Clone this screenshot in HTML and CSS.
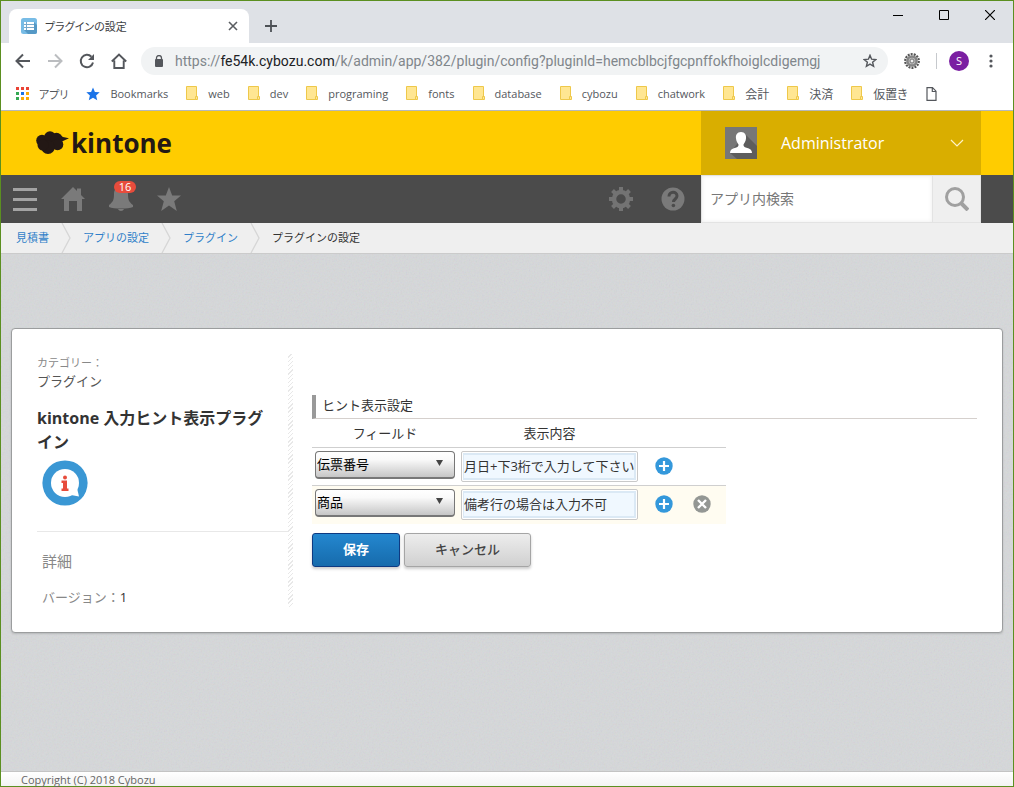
FILE: index.html
```html
<!DOCTYPE html>
<html lang="ja">
<head>
<meta charset="utf-8">
<title>プラグインの設定</title>
<link rel="stylesheet" href="styles.css">
</head>
<body>
<svg class="defs" aria-hidden="true">
  <symbol id="folder" viewBox="0 0 12 15">
    <path d="M.5.5h10v13H.5z" fill="#ffe692" stroke="#eec84a"/>
    <path d="M9.5 10.5h2v3h-2z" fill="#ffe692" stroke="#eec84a"/>
  </symbol>
  <symbol id="plus" viewBox="0 0 18 18">
    <circle cx="9" cy="9" r="8.7" fill="#3498db"/>
    <path d="M9 4v10M4 9h10" stroke="#fff" stroke-width="2.2"/>
  </symbol>
  <symbol id="remove" viewBox="0 0 18 18">
    <circle cx="9" cy="9" r="8.7" fill="#949794"/>
    <path d="M5 5l8 8M13 5l-8 8" stroke="#fff" stroke-width="2.4"/>
  </symbol>
</svg>
<div class="window">
  <div class="tabstrip">
    <div class="tab">
      <svg width="16" height="16" viewBox="0 0 16 16"><rect width="16" height="16" rx="2.5" fill="#78bce6"/><path d="M13 4l3 3v7a2 2 0 0 1-2 2H7l-4-4z" fill="#5599c6"/><rect x="3" y="4" width="10" height="8" fill="#fff"/><path d="M3 6.500h10M3 9.500h10M5.500 4v8" stroke="#78a9cc"/></svg>
      <span class="tab-title">プラグインの設定</span>
      <button class="icon-btn" aria-label="タブを閉じる"><svg width="10" height="10" viewBox="0 0 10 10"><path d="M1 1l8 8M9 1l-8 8" stroke="#5a5d61" stroke-width="1.6"/></svg></button>
    </div>
    <button class="icon-btn new-tab" aria-label="新しいタブ"><svg width="12" height="12" viewBox="0 0 12 12"><path d="M6 0v12M0 6h12" stroke="#4d5156" stroke-width="1.8"/></svg></button>
    <div class="window-controls">
      <button class="icon-btn" aria-label="最小化"><svg width="10" height="10" viewBox="0 0 10 10"><path d="M0 5.500h10" stroke="#000"/></svg></button>
      <button class="icon-btn" aria-label="最大化"><svg width="10" height="10" viewBox="0 0 10 10"><path d="M.5.5h9v9h-9z" fill="none" stroke="#000"/></svg></button>
      <button class="icon-btn" aria-label="閉じる"><svg width="10" height="10" viewBox="0 0 10 10"><path d="M0 0l10 10M10 0L0 10" stroke="#000" stroke-width="1.2"/></svg></button>
    </div>
  </div>

  <div class="toolbar">
    <div class="history">
      <button class="icon-btn" aria-label="戻る"><svg width="16" height="16" viewBox="0 0 16 16"><path d="M15 8H2M8 1.500L1.500 8 8 14.500" fill="none" stroke="#54575c" stroke-width="2"/></svg></button>
      <button class="icon-btn" aria-label="進む"><svg width="16" height="16" viewBox="0 0 16 16"><path d="M1 8h13M8 1.500L14.500 8 8 14.500" fill="none" stroke="#bbbdc0" stroke-width="2"/></svg></button>
      <button class="icon-btn" aria-label="再読み込み"><svg width="16" height="16" viewBox="0 0 16 16"><path d="M14 9.500A6.200 6.200 0 1 1 12.400 3.700" fill="none" stroke="#54575c" stroke-width="2"/><path d="M15 1v6H9z" fill="#54575c"/></svg></button>
      <button class="icon-btn" aria-label="ホーム"><svg width="16" height="16" viewBox="0 0 16 16"><path d="M.8 8.500L8 1.500l7.200 7M3.300 7.500v7.500h9.400V7.500" fill="none" stroke="#54575c" stroke-width="1.9"/></svg></button>
    </div>
    <div class="omnibox">
      <svg width="10" height="12" viewBox="0 0 10 12"><rect x="1" y="4" width="8" height="8" rx="1" fill="#54575c"/><path d="M2.500 5V3a2.500 2.500 0 0 1 5 0v2" fill="none" stroke="#54575c" stroke-width="1.3"/></svg>
      <span class="url">https://<span class="url-host">fe54k.cybozu.com</span>/k/admin/app/382/plugin/config?pluginId=hemcblbcjfgcpnffokfhoiglcdigemgj</span>
      <button class="icon-btn" aria-label="ブックマークに追加"><svg width="14" height="14" viewBox="0 0 14 14"><path d="M7 1.300l1.600 3.900 4.200.3-3.200 2.700 1 4.100L7 10.100l-3.600 2.200 1-4.100L1.200 5.500l4.200-.3z" fill="none" stroke="#54575c" stroke-width="1.4"/></svg></button>
    </div>
    <svg class="ext" width="16" height="16" viewBox="0 0 16 16"><circle cx="8" cy="8" r="6.800" fill="none" stroke="#555" stroke-width="2.2" stroke-dasharray="2 1.05"/><circle cx="8" cy="8" r="4.600" fill="#bbb" stroke="#858585" stroke-width="2.5"/><circle cx="8" cy="8" r="2" fill="#eee" stroke="#777"/></svg>
    <span class="toolbar-sep"></span>
    <button class="avatar" aria-label="プロフィール">S</button>
    <button class="icon-btn" aria-label="メニュー"><svg width="4" height="14" viewBox="0 0 4 14"><circle cx="2" cy="2" r="1.6" fill="#54575c"/><circle cx="2" cy="7" r="1.6" fill="#54575c"/><circle cx="2" cy="12" r="1.6" fill="#54575c"/></svg></button>
  </div>

  <nav class="bookmarks" aria-label="ブックマーク">
    <a href="#"><svg width="13" height="13" viewBox="0 0 13 13"><path d="M0 0h3v3H0zM5 0h3v3H5zM10 0h3v3h-3z" fill="#ea4335"/><path d="M0 5h3v3H0zM0 10h3v3H0z" fill="#34a853"/><path d="M5 5h3v3H5z" fill="#1a73e8"/><path d="M10 5h3v3h-3zM5 10h3v3H5zM10 10h3v3h-3z" fill="#fbaa05"/></svg>アプリ</a>
    <a href="#"><svg width="14" height="14" viewBox="0 0 14 14"><path d="M7 .5l1.900 4.400 4.800.4-3.600 3.200 1.100 4.800L7 10.800l-4.200 2.500 1.100-4.800L.3 5.300l4.800-.4z" fill="#1a73e8"/></svg>Bookmarks</a>
    <a href="#"><svg width="12" height="15"><use href="#folder"/></svg>web</a>
    <a href="#"><svg width="12" height="15"><use href="#folder"/></svg>dev</a>
    <a href="#"><svg width="12" height="15"><use href="#folder"/></svg>programing</a>
    <a href="#"><svg width="12" height="15"><use href="#folder"/></svg>fonts</a>
    <a href="#"><svg width="12" height="15"><use href="#folder"/></svg>database</a>
    <a href="#"><svg width="12" height="15"><use href="#folder"/></svg>cybozu</a>
    <a href="#"><svg width="12" height="15"><use href="#folder"/></svg>chatwork</a>
    <a class="kanji" href="#"><svg width="12" height="15"><use href="#folder"/></svg>会計</a>
    <a class="kanji" href="#"><svg width="12" height="15"><use href="#folder"/></svg>決済</a>
    <a class="kanji" href="#"><svg width="12" height="15"><use href="#folder"/></svg>仮置き</a>
    <a href="#" aria-label="ページ"><svg width="11" height="14" viewBox="0 0 11 14"><path d="M1 .7h5.500L10 4.200v9.100H1zM6.300.7v3.800H10" fill="none" stroke="#54575c" stroke-width="1.2"/></svg></a>
  </nav>

  <header class="brand">
    <a class="logo" href="#">
      <svg width="33" height="24" viewBox="0 0 33 24"><g fill="#231815"><circle cx="6" cy="9.500" r="5.800"/><circle cx="14" cy="6" r="5.800"/><circle cx="20.500" cy="7.500" r="5.800"/><circle cx="21.500" cy="13.500" r="5.800"/><circle cx="12" cy="16.300" r="6.800"/><circle cx="7" cy="14" r="5.500"/><path d="M24 4l3 2 6 1.300-6 2.700-3 2z"/></g></svg>
      <span>kintone</span>
    </a>
    <button class="user">
      <svg width="32" height="32" viewBox="0 0 32 32"><path fill="#777" d="M0 0h32v32H0z"/><path d="M20 7l12 12v13H12l-7-6z" fill="#5d5d5d"/><path d="M16 5c4 0 5.500 3 5 6.500-.3 3-1.500 4.500-2.500 6 0 2 .5 2.500 3 3.300 3.500 1 5.500 2.200 5.500 5.200H5c0-3 2-4.200 5.500-5.200 2.500-.8 3-1.300 3-3.300-1-1.500-2.200-3-2.500-6C10.500 8 12 5 16 5z" fill="#fff"/></svg>
      <span>Administrator</span>
      <svg width="14" height="8" viewBox="0 0 14 8"><path d="M1 1l6 6 6-6" fill="none" stroke="#fff3c8" stroke-width="1.2"/></svg>
    </button>
  </header>

  <div class="global-nav">
    <div class="nav-left">
      <button class="icon-btn" aria-label="メニュー"><svg width="24" height="23" viewBox="0 0 24 23"><path d="M0 1.500h24M0 11.500h24M0 21.500h24" stroke="#a3a3a3" stroke-width="3"/></svg></button>
      <button class="icon-btn" aria-label="ホーム"><svg width="24" height="24" viewBox="0 0 24 24"><path d="M12 0l4 4V1.500h4V8l4 4h-3v12h-5V14H8v10H3V12H0z" fill="#7a7a7a"/></svg></button>
      <button class="icon-btn bell" aria-label="通知 16件"><svg width="24" height="24" viewBox="0 0 24 24"><path d="M12 0c5 0 7 3 7 7 0 6 1 8 5 11v2c-5 2-19 2-24 0v-2c4-3 5-5 5-11 0-4 2-7 7-7zM9 22h6c-1 2.500-5 2.500-6 0z" fill="#7a7a7a"/></svg><span class="badge">16</span></button>
      <button class="icon-btn" aria-label="お気に入り"><svg width="24" height="24" viewBox="0 0 24 24"><path d="M12 0l3.200 8.600H24l-6.800 5.700L19.800 24 12 18.500 4.200 24l2.600-9.700L0 8.600h8.800z" fill="#7a7a7a"/></svg></button>
    </div>
    <div class="nav-right">
      <button class="icon-btn" aria-label="設定"><svg width="24" height="24" viewBox="0 0 24 24"><g fill="none" stroke="#737373"><circle cx="12" cy="12" r="7" stroke-width="4.5"/><path d="M12 0v4M12 20v4M0 12h4M20 12h4M3.500 3.500l3 3M17.500 17.500l3 3M3.500 20.500l3-3M17.500 6.500l3-3" stroke-width="4"/></g></svg></button>
      <button class="icon-btn" aria-label="ヘルプ"><svg width="24" height="24" viewBox="0 0 24 24"><circle cx="12" cy="12" r="11.500" fill="#7a7a7a"/><path d="M8 9.500C8 4 16 4 16 9c0 3-3.500 3-3.500 6" fill="none" stroke="#4b4b4b" stroke-width="3"/><circle cx="12.400" cy="18.500" r="1.800" fill="#4b4b4b"/></svg></button>
    </div>
    <form class="search">
      <input type="search" placeholder="アプリ内検索" aria-label="アプリ内検索">
      <button type="button" aria-label="検索"><svg width="24" height="24" viewBox="0 0 24 24"><circle cx="10" cy="10" r="8.500" fill="none" stroke="#a0a0a0" stroke-width="3"/><path d="M15.500 15.500l7.500 7.500" stroke="#a0a0a0" stroke-width="4"/></svg></button>
    </form>
  </div>

  <nav class="crumbs" aria-label="パンくず">
    <a href="#">見積書</a>
    <svg width="10" height="30" viewBox="0 0 10 30"><path d="M1 0l8 15-8 15" fill="none" stroke="#d6d6d6" stroke-width="1.3"/></svg>
    <a href="#">アプリの設定</a>
    <svg width="10" height="30" viewBox="0 0 10 30"><path d="M1 0l8 15-8 15" fill="none" stroke="#d6d6d6" stroke-width="1.3"/></svg>
    <a href="#">プラグイン</a>
    <svg width="10" height="30" viewBox="0 0 10 30"><path d="M1 0l8 15-8 15" fill="none" stroke="#d6d6d6" stroke-width="1.3"/></svg>
    <span>プラグインの設定</span>
  </nav>

  <main class="content">
    <svg class="grain" aria-hidden="true"><filter id="grain" x="0" y="0" width="100%" height="100%"><feTurbulence type="fractalNoise" baseFrequency="0.6" numOctaves="2"/></filter><rect width="100%" height="100%" filter="url(#grain)"/></svg>
    <section class="card">
      <aside class="info">
        <p class="category-label">カテゴリー：</p>
        <p class="category">プラグイン</p>
        <h1>kintone 入力ヒント表示プラグイン</h1>
        <svg class="plugin-icon" width="46" height="46" viewBox="0 0 46 46"><circle cx="23" cy="23" r="22.600" fill="#3a97d4"/><circle cx="23" cy="23" r="14" fill="#fff"/><path d="M35 28l2 8.500-8-1.500z" fill="#fff"/><circle cx="23" cy="17.500" r="2" fill="#e74c3c"/><path d="M19.500 20.500h5.500v8h1.500V31h-7v-2.500H21V23h-1.500z" fill="#e74c3c"/></svg>
        <div class="details">
          <h2>詳細</h2>
          <p>バージョン：<b>1</b></p>
        </div>
      </aside>
      <div class="divider"></div>
      <form class="settings">
        <h2>ヒント表示設定</h2>
        <table>
          <thead><tr><th>フィールド</th><th>表示内容</th><td></td></tr></thead>
          <tbody>
            <tr>
              <td><span class="select"><select aria-label="フィールド 1"><option>伝票番号</option><option>商品</option></select></span></td>
              <td><span class="field"><input type="text" aria-label="表示内容 1" value="月日+下3桁で入力して下さい"></span></td>
              <td><div class="actions"><button type="button" class="icon-btn" aria-label="行を追加"><svg width="18" height="18"><use href="#plus"/></svg></button></div></td>
            </tr>
            <tr>
              <td><span class="select"><select aria-label="フィールド 2"><option>商品</option><option>伝票番号</option></select></span></td>
              <td><span class="field"><input type="text" aria-label="表示内容 2" value="備考行の場合は入力不可"></span></td>
              <td><div class="actions"><button type="button" class="icon-btn" aria-label="行を追加"><svg width="18" height="18"><use href="#plus"/></svg></button><button type="button" class="icon-btn" aria-label="行を削除"><svg width="18" height="18"><use href="#remove"/></svg></button></div></td>
            </tr>
          </tbody>
        </table>
        <div class="buttons">
          <button type="button" class="btn btn-save">保存</button>
          <button type="button" class="btn btn-cancel">キャンセル</button>
        </div>
      </form>
    </section>
  </main>
  <footer class="footer">Copyright (C) 2018 Cybozu</footer>
</div>
</body>
</html>
```
FILE: styles.css
```css
* { box-sizing: border-box; }
body, h1, h2, p { margin: 0; }
body, button, input, select {
  font-family: "Open Sans", "Noto Sans CJK JP", sans-serif;
  font-size: 13px;
}
body { color: #333; }
svg { display: block; flex: none; }
a { color: inherit; text-decoration: none; }
.defs { position: absolute; width: 0; height: 0; }
.icon-btn { display: block; padding: 0; border: 0; background: none; flex: none; }

.window {
  display: flex;
  flex-direction: column;
  min-height: 100vh;
  border: 1px solid #5b8f20;
}

/* Browser chrome */
.tabstrip {
  display: flex;
  height: 42px;
  padding: 8px 18px 0 8px;
  background: #dee1e6;
}
.tab {
  display: flex;
  align-items: center;
  gap: 8px;
  width: 240px;
  padding: 0 11px 0 12px;
  border-radius: 8px 8px 0 0;
  background: #fff;
}
.tab-title { flex: 1; font-size: 11px; font-feature-settings: "palt"; color: #3c4043; white-space: nowrap; }
.new-tab { align-self: center; margin-left: 16px; }
.window-controls { display: flex; gap: 36px; margin-left: auto; padding-top: 1px; align-items: flex-start; }

.toolbar {
  display: flex;
  align-items: center;
  height: 36px;
  padding: 0 20px 0 14px;
  background: #fff;
}
.history { display: flex; gap: 16px; }
.omnibox {
  display: flex;
  align-items: center;
  flex: 1;
  min-width: 0;
  height: 28px;
  margin-left: 14px;
  padding: 0 11px 0 13px;
  border-radius: 14px;
  background: #f1f3f4;
}
.url { flex: 1; min-width: 0; margin-left: 11px; overflow: hidden; white-space: nowrap; font-family: Roboto, "Open Sans", sans-serif; font-size: 14px; color: #80868b; }
.url-host { color: #202124; }
.ext { margin-left: 16px; }
.toolbar-sep { width: 1px; height: 16px; margin: 0 12px 0 16px; background: #c6c9cd; }
.avatar {
  width: 20px;
  height: 20px;
  margin-right: 20px;
  padding: 0;
  border: 0;
  border-radius: 50%;
  background: #7b1fa2;
  color: #fff;
  font-size: 11px;
  line-height: 20px;
}

.bookmarks {
  display: flex;
  align-items: center;
  gap: 18px;
  height: 32px;
  padding: 0 15px 2px;
  border-bottom: 1px solid #b6b8bb;
  background: #fff;
  color: #54575c;
  font-size: 11px;
  white-space: nowrap;
}
.bookmarks a { display: flex; align-items: center; gap: 10px; font-feature-settings: "palt"; }
.bookmarks .kanji { font-size: 12px; }

/* Application header */
.brand {
  display: flex;
  justify-content: space-between;
  height: 64px;
  padding: 0 32px 0 35px;
  background: #ffcc00;
}
.logo { display: flex; align-items: center; gap: 2px; color: #231815; font-size: 26px; font-weight: 700; }
.user {
  display: flex;
  align-items: center;
  width: 280px;
  padding: 0 17px 0 24px;
  border: 0;
  background: #d9ae00;
  color: #fff;
  font-size: 16px;
  text-align: left;
}
.user span { flex: 1; padding-left: 24px; }

.global-nav {
  display: flex;
  align-items: center;
  height: 48px;
  padding: 0 32px 0 12px;
  background: #4b4b4b;
}
.nav-left { display: flex; align-items: center; gap: 24px; }
.nav-right { display: flex; gap: 28px; margin: 0 16px 0 auto; }
.bell { position: relative; }
.badge {
  position: absolute;
  top: -6px;
  left: 5px;
  width: 22px;
  border-radius: 6px;
  background: #e74c3c;
  color: #fff;
  font-size: 11px;
  line-height: 12px;
}
.search { display: flex; width: 280px; height: 48px; border: 1px solid #e3e3e3; }
.search input {
  flex: 1;
  min-width: 0;
  padding: 0 8px 2px;
  border: 0;
  background: #fff;
  box-shadow: inset 0 0 4px #ececec;
  font-size: 14px;
}
.search input::placeholder { color: #777; }
.search button {
  display: grid;
  place-items: center;
  width: 48px;
  padding: 0;
  border: 0;
  border-left: 1px solid #e3e3e3;
  background: #efefef;
}

.crumbs {
  display: flex;
  align-items: center;
  height: 31px;
  padding-left: 15px;
  border-bottom: 1px solid #cbcbcb;
  background: #efefef;
  font-size: 11px;
  line-height: 28px;
}
.crumbs a { color: #2f7fc9; }
.crumbs svg { margin: 0 12px; }

/* Page body */
.content { position: relative; flex: 1; padding: 74px 10px; background: #d6d8da; }
.grain { position: absolute; inset: 0; width: 100%; height: 100%; opacity: 0.12; }
.card {
  position: relative;
  display: flex;
  padding: 25px;
  border: 1px solid #9b9d9e;
  border-radius: 4px;
  background: #fff;
  box-shadow: 0 1px 2px #b5b7b9;
}
.info { width: 251px; flex: none; }
.category-label { font-size: 11px; line-height: 18px; color: #888; }
.category { line-height: 18px; color: #555; }
h1 { margin: 16px 0 6px; padding-right: 16px; font-size: 16px; line-height: 24px; }
.plugin-icon { margin-left: 5px; }
.details { margin-top: 25px; padding: 19px 5px 0; border-top: 1px solid #e8e8e8; color: #888; }
.details h2 { font-size: 15px; font-weight: 400; line-height: 20px; }
.details p { margin-top: 16px; line-height: 20px; }
.details b { font-weight: 400; color: #333; }
.divider {
  width: 5px;
  flex: none;
  background: repeating-linear-gradient(135deg, #fff 0 2px, #e8e8e8 2px 3px);
}
.settings { flex: 1; margin-left: 19px; padding-top: 41px; }
.settings h2 {
  padding: 0 0 2px 6px;
  border-left: 4px solid #999;
  border-bottom: 1px solid #d5d0cd;
  font-size: 13px;
  font-weight: 400;
  line-height: 21px;
}
table { width: 414px; border-collapse: collapse; }
th { height: 28px; padding: 0; font-weight: 400; line-height: 28px; }
th:first-child { width: 146px; }
th:nth-child(2) { width: 183px; }
td { padding: 0; }
tbody td { height: 38px; padding: 3px; vertical-align: top; }
tbody tr { border-top: 1px solid #cfcfcf; }
tbody tr:nth-child(2) { background: #fffcf1; }
.select { position: relative; display: block; }
.select::after {
  content: "";
  position: absolute;
  top: 9px;
  right: 12px;
  width: 7px;
  height: 6px;
  background: #444;
  clip-path: polygon(0 0, 100% 0, 50% 100%);
  pointer-events: none;
}
select {
  display: block;
  width: 140px;
  height: 28px;
  padding: 0 1px 1px;
  border: 1px solid #777;
  border-bottom-width: 2px;
  border-radius: 4px;
  appearance: none;
  background: linear-gradient(#fff, #fafafa 30%, #c6c6c6);
  color: #000;
}
.field { display: block; height: 31px; padding: 1px; border: 1px solid #c9c9c9; border-radius: 2px; background: #fff; }
.field input {
  display: block;
  width: 100%;
  height: 27px;
  padding: 0 0 3px;
  border: 2px solid #dbe9f5;
  border-left-width: 1px;
  background: #f0f8ff;
  color: #333;
}
.actions { display: flex; gap: 20px; padding: 6px 0 0 11px; }
.buttons { display: flex; gap: 4px; margin-top: 9px; }
.btn { height: 34px; padding: 0 0 3px; border-radius: 3px; box-shadow: 0 2px 3px #ccc; font-weight: 700; }
.btn-save { width: 88px; border: 1px solid #0e3a82; background: linear-gradient(#2487cf, #166bac); color: #fff; }
.btn-cancel { width: 127px; border: 1px solid #a5a5a5; background: linear-gradient(#ededed, #d0d0d0); color: #444; font-weight: 500; }

.footer {
  height: 15px;
  padding-left: 20px;
  border-top: 1px solid #c4c4c4;
  background: linear-gradient(#fff, #f3f3f3);
  color: #666;
  font-size: 11px;
  line-height: 15px;
}
```
